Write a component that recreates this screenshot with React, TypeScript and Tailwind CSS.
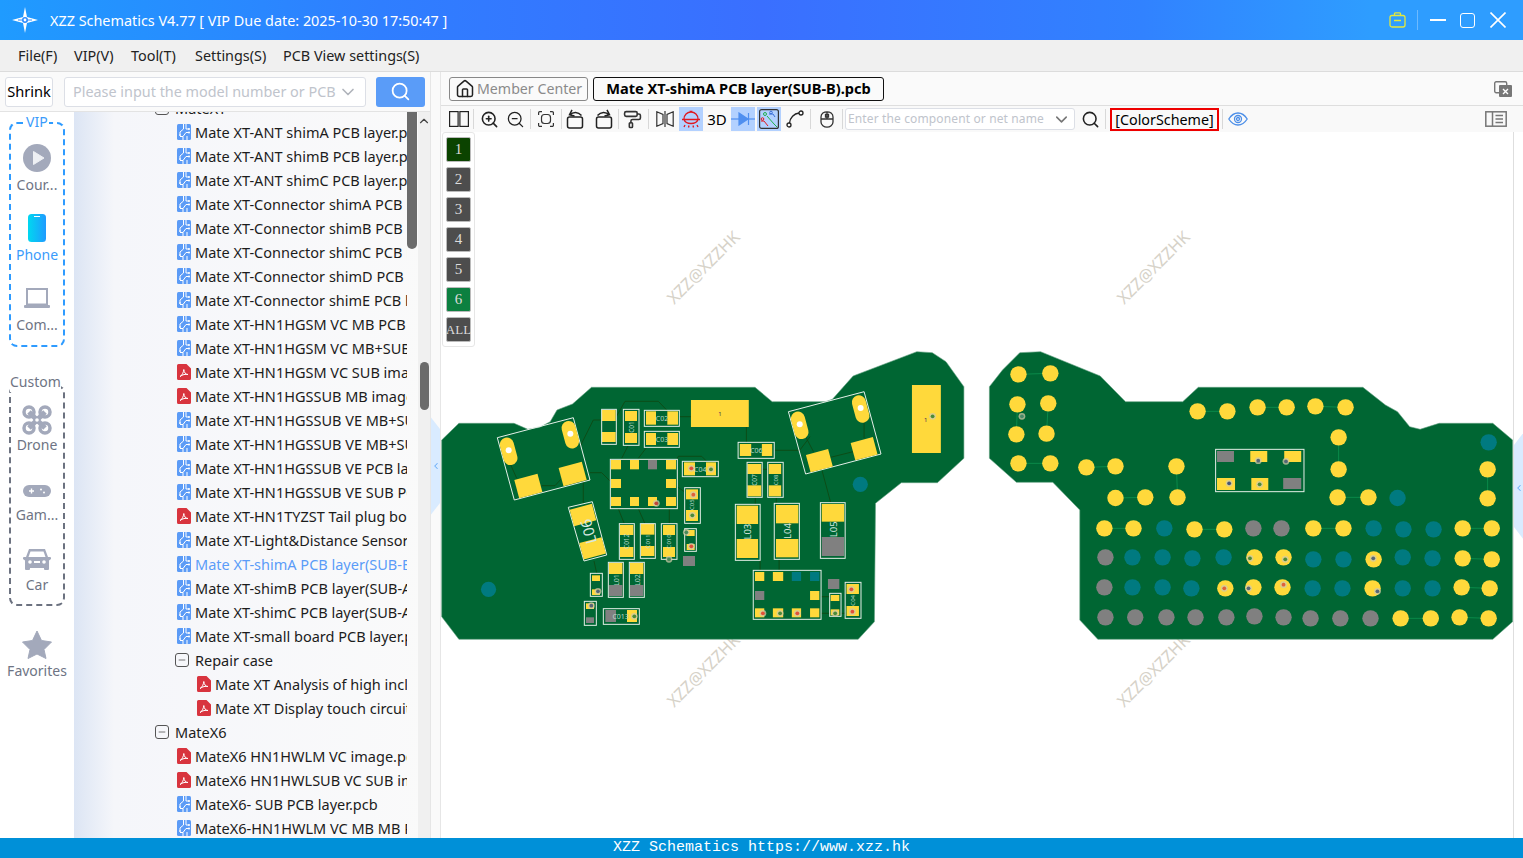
import React from "react";
import { ZoomIn, ZoomOut, PaintRoller, Search, House, ChevronDown, ChevronUp, ChevronLeft, Minus } from "lucide-react";

const Z4 = (x: number, y: number): [number, number] => [440 + x / 2.905, 340 + y / 3];
const Z5 = (x: number, y: number): [number, number] => [980 + x / 2.886, 340 + y / 3];
const Z7 = (x: number, y: number): [number, number] => [490 + x / 3, 400 + y / 3];
type M = (x: number, y: number) => [number, number];
const GREEN = "#006633", Y = "#ffd93b", T = "#007a80", G = "#808080";

const pts = (m: M, a: number[][]) => a.map(([x, y]) => m(x, y).map((v) => v.toFixed(1)).join(",")).join(" ");

const leftOutline = [[5,300],[55,250],[215,250],[255,268],[290,262],[320,245],[340,210],[385,192],[440,142],[915,142],[965,185],[1120,185],[1140,178],[1200,108],[1385,35],[1430,38],[1470,65],[1522,140],[1522,355],[1445,428],[1340,428],[1265,490],[1262,845],[1215,898],[55,898],[5,830]];
const rightOutline = [[27,140],[65,90],[115,38],[175,35],[347,108],[420,185],[585,185],[630,142],[1105,142],[1170,195],[1205,215],[1240,260],[1270,268],[1325,250],[1480,250],[1537,300],[1537,845],[1480,898],[340,898],[288,840],[288,510],[210,427],[105,427],[27,355]];

const rCircles: [number, number, string][] = [
  [111,103,Y],[203,100,Y],[108,193,Y],[197,190,Y],[105,283,Y],[192,281,Y],[111,370,Y],[203,370,Y],[307,382,Y],[391,379,Y],[391,474,Y],[477,472,Y],[567,379,Y],[570,472,Y],[628,214,Y],[714,214,Y],[801,202,Y],[885,202,Y],[968,199,Y],[1055,202,Y],[1035,292,Y],[1035,388,Y],[1032,472,Y],[1121,472,Y],[1465,388,Y],[1465,475,Y],[1468,307,T],[1205,474,T],
  [359,565,Y],[443,565,Y],[532,565,T],[619,568,Y],[705,568,Y],[789,565,G],[870,565,G],[962,565,Y],[1049,565,Y],[1136,565,T],[1222,568,T],[1309,568,T],[1393,565,Y],[1477,565,Y],
  [362,652,G],[440,652,T],[527,652,T],[613,655,T],[703,652,T],[792,652,Y],[876,652,Y],[962,658,T],[1049,658,T],[1136,658,Y],[1220,652,T],[1306,655,T],[1393,655,Y],[1477,658,Y],
  [359,742,G],[440,742,T],[527,742,T],[610,745,T],[708,745,Y],[789,742,Y],[873,742,Y],[960,745,T],[1046,745,T],[1133,745,Y],[1220,745,T],[1306,745,T],[1390,742,Y],[1471,745,Y],
  [362,832,G],[448,832,G],[538,832,G],[622,832,G],[711,832,G],[792,829,G],[876,832,G],[954,835,G],[1040,835,G],[1127,835,G],[1214,835,Y],[1301,835,Y],[1384,832,Y],[1468,835,Y],
];
const rLinks = [[111,103,203,100],[108,193,105,283],[197,190,192,281],[111,370,203,370],[307,382,391,379],[391,474,477,472],[567,379,570,472],[628,214,714,214],[801,202,885,202],[968,199,1055,202],[1035,292,1035,388],[1032,472,1121,472],[1465,388,1465,475],[359,565,443,565],[619,568,705,568],[962,565,1049,565],[1393,565,1477,565],[1393,655,1477,658],[1390,742,1471,745],[1214,835,1301,835],[1384,832,1468,835]];
const rDots: [number, number, string][] = [[121,229,"#4a8a6a"],[803,362,"#556677"],[883,364,"#556677"],[719,430,"#445577"],[807,433,"#4a8a3a"],[779,655,"#4a8a3a"],[881,658,"#4a8a3a"],[1135,655,"#556677"],[705,745,"#e0603a"],[775,745,"#556677"],[876,734,"#e0603a"],[1147,754,"#556677"]];

type R = [number, number, number, number, string?];
const z7Pads: R[] = [
  [335,30,42,33],[335,96,42,30],[405,33,36,30],[405,99,36,30],[468,34,30,40],[532,34,32,40],[468,99,30,36],[532,99,32,36],
  [363,180,30,28],[420,180,27,28],[474,180,27,28,G],[528,180,30,28],[363,237,30,27],[528,237,30,27],[363,291,30,27],[420,291,27,27],[474,291,27,27],[528,291,30,27],
  [582,187,33,39],[648,187,30,39],[588,268,36,30],[588,330,36,33],[390,375,40,30],[390,441,40,30],[453,371,40,33],[453,438,40,30],[519,375,36,30],[519,441,36,30],
  [590,390,24,18],[590,432,24,18],[579,468,36,30,G],[357,489,40,33],[357,555,40,33,G],[420,489,40,33],[420,555,40,33,G],[306,526,24,17],[306,568,24,17],[288,610,24,17],[288,652,24,17,G],[346,630,32,36,G],[411,630,30,36],
];
const z7Boxes = [[335,28,379,133],[400,28,447,136],[463,31,568,79],[463,94,568,142],[361,178,562,326],[577,184,685,230],[584,263,631,370],[388,371,433,478],[451,371,496,475],[514,371,561,478],[584,386,619,454],[355,487,400,592],[418,487,463,592],[301,520,337,589],[283,604,319,676],[340,626,448,673]];
const z4Pads: R[] = [
  [729,180,168,81],[1371,135,84,204],[871,312,33,36],[935,312,30,36],[893,372,40,30],[893,436,40,33],[955,372,36,30],[955,436,36,33],[862,497,62,55],[862,597,62,57],[976,495,65,55],[976,597,65,55],[1109,492,65,53],[1109,591,65,57,G],
  [915,696,27,27],[967,696,30,27],[1022,696,27,27,T],[1075,696,27,27,T],[915,753,27,27,G],[1075,753,27,27],[915,805,27,27],[967,805,30,27],[1022,805,27,27],[1075,805,27,27],[1127,717,33,30,G],[1135,765,25,18],[1135,808,25,18],[1181,732,36,30],[1181,798,36,30],
];
const z4Boxes = [[866,307,971,355],[892,367,936,472],[952,367,997,472],[858,493,930,661],[971,490,1044,658],[1105,488,1177,655],[910,691,1107,838],[1132,760,1165,829],[1177,727,1223,835]];
const z7Dots: [number, number, string][] = [[499,310,"#c0443a"],[604,205,"#e0503a"],[663,208,"#4a8a3a"],[610,284,"#e0603a"],[607,346,"#4a8a3a"],[537,478,"#4a8a5a"],[589,397,"#4a8a5a"],[604,439,"#e0503a"],[324,574,"#556677"],[304,617,"#556677"],[433,649,"#4a8a3a"]];
const z4Dots: [number, number, string][] = [[938,820,"#e0503a"],[988,820,"#4a8a3a"],[1038,820,"#e0503a"],[1148,820,"#4a8a3a"],[1195,748,"#e0503a"],[1198,815,"#e0503a"],[1431,229,"#4a8a3a"]];
const traces7 = ["335,60 310,60 270,140", "379,50 405,4 505,4 530,30", "415,136 395,175", "470,142 445,175", "300,218 335,218 361,244", "560,180 565,169 635,169 650,184", "562,260 584,276", "385,326 403,371", "445,326 465,371", "538,326 538,371", "280,240 280,310", "312,483 320,520", "60,190 80,235", "155,257 195,257 215,235", "400,592 398,487", "568,50 603,50"];
const traces4 = ["890,261 890,307", "971,331 1045,331 1075,290", "1135,352 1200,335", "1110,392 1135,488", "916,472 916,493", "977,472 977,490", "930,661 930,691", "985,658 985,691", "1107,820 1132,820", "1107,770 1132,770", "1165,820 1177,820", "936,388 952,388", "1062,290 1085,335", "1232,245 1232,295"];

function Label({ x, y, t, rot = 0, size = 7, fill = "#b7d8c8" }: { x: number; y: number; t: string; rot?: number; size?: number; fill?: string }) {
  return (
    <text x={x} y={y} fontSize={size} fill={fill} textAnchor="middle" dominantBaseline="central" fontFamily="Noto Sans, sans-serif" transform={rot ? `rotate(${rot} ${x} ${y})` : undefined}>
      {t}
    </text>
  );
}

function Rotated({ m, cx, cy, w, h }: { m: M; cx: number; cy: number; w: number; h: number }) {
  const [x, y] = m(cx, cy);
  return <rect x={x - w / 2} y={y - h / 2} width={w} height={h} fill={Y} transform={`rotate(-15 ${x} ${y})`} />;
}
function Slot({ m, cx, cy }: { m: M; cx: number; cy: number }) {
  const [x, y] = m(cx, cy);
  return (
    <g>
      <rect x={x - 7} y={y - 14} width={14} height={28} rx={7} fill={Y} transform={`rotate(-15 ${x} ${y})`} />
      <circle cx={x} cy={y - 1} r={3} fill="#fff" />
    </g>
  );
}
function Dot({ m, d }: { m: M; d: [number, number, string] }) {
  const [x, y] = m(d[0], d[1]);
  return (
    <g>
      <circle cx={x} cy={y} r={3.4} fill="#cfc9a8" opacity={0.75} />
      <circle cx={x} cy={y} r={1.9} fill={d[2]} />
    </g>
  );
}

function Pcb() {
  const rect = (m: M, r: R, k: string) => {
    const [x, y] = m(r[0], r[1]);
    const [x2, y2] = m(r[0] + r[2], r[1] + r[3]);
    return <rect key={k} x={x} y={y} width={x2 - x} height={y2 - y} fill={r[4] || Y} />;
  };
  const box = (m: M, r: number[], k: string) => {
    const [x, y] = m(r[0], r[1]);
    const [x2, y2] = m(r[2], r[3]);
    return <rect key={k} x={x} y={y} width={x2 - x} height={y2 - y} fill="none" stroke="#e4efe8" strokeWidth={1} />;
  };
  const wm: [number, number][] = [[703, 267], [1153, 267], [703, 670], [1153, 670]];
  return (
    <svg viewBox="441 132 1072 706" className="absolute inset-0 h-full w-full">
      {wm.map(([x, y]) => (
        <text key={x + "" + y} x={x} y={y} fontSize={16.5} fill="#d6d2c8" textAnchor="middle" dominantBaseline="central" fontFamily="Noto Sans, sans-serif" transform={`rotate(-45 ${x} ${y})`}>
          XZZ@XZZHK
        </text>
      ))}
      <polygon points={pts(Z4, leftOutline)} fill={GREEN} stroke="#5f9f80" strokeWidth={0.6} strokeLinejoin="round" />
      <polygon points={pts(Z5, rightOutline)} fill={GREEN} stroke="#5f9f80" strokeWidth={0.6} strokeLinejoin="round" />

      {traces7.map((t, i) => (
        <polyline key={i} points={pts(Z7, t.split(" ").map((p) => p.split(",").map(Number)))} fill="none" stroke="#0d4a14" strokeWidth={0.9} />
      ))}
      {traces4.map((t, i) => (
        <polyline key={i} points={pts(Z4, t.split(" ").map((p) => p.split(",").map(Number)))} fill="none" stroke="#0d4a14" strokeWidth={0.9} />
      ))}

      {z7Pads.map((r, i) => rect(Z7, r, "a" + i))}
      {z4Pads.map((r, i) => rect(Z4, r, "b" + i))}
      {z7Boxes.map((r, i) => box(Z7, r, "c" + i))}
      {z4Boxes.map((r, i) => box(Z4, r, "d" + i))}

      <polygon points={pts(Z7, [[22,113],[250,53],[300,240],[73,300]])} fill="none" stroke="#e4efe8" strokeWidth={1} />
      <polygon points={pts(Z4, [[1012,215],[1232,155],[1281,342],[1062,402]])} fill="none" stroke="#e4efe8" strokeWidth={1} />
      <polygon points={pts(Z7, [[235,322],[307,305],[350,465],[282,483]])} fill="none" stroke="#e4efe8" strokeWidth={1} />
      <Rotated m={Z7} cx={115} cy={258} w={24} h={19} />
      <Rotated m={Z7} cx={248} cy={222} w={24} h={19} />
      <Rotated m={Z7} cx={279} cy={345} w={23} h={17} />
      <Rotated m={Z7} cx={308} cy={445} w={23} h={17} />
      <Rotated m={Z4} cx={1102} cy={362} w={23} h={18} />
      <Rotated m={Z4} cx={1232} cy={326} w={23} h={18} />
      <Slot m={Z7} cx={56} cy={154} />
      <Slot m={Z7} cx={241} cy={104} />
      <Slot m={Z4} cx={1045} cy={256} />
      <Slot m={Z4} cx={1222} cy={207} />

      <circle cx={Z4(141,748)[0]} cy={Z4(141,748)[1]} r={7.6} fill={T} />
      <circle cx={Z4(1221,433)[0]} cy={Z4(1221,433)[1]} r={7.6} fill={T} />

      {rLinks.map((l, i) => {
        const a = Z5(l[0], l[1]);
        const b = Z5(l[2], l[3]);
        return <line key={i} x1={a[0]} y1={a[1]} x2={b[0]} y2={b[1]} stroke="#0a8a4a" strokeWidth={1} />;
      })}
      {rCircles.map((c, i) => {
        const [x, y] = Z5(c[0], c[1]);
        return <circle key={i} cx={x} cy={y} r={8.2} fill={c[2]} />;
      })}
      {[[684,333,49,33,G],[780,333,49,33,Y],[878,333,49,33,Y],[684,414,52,36,Y],[783,414,49,36,Y],[875,414,52,33,G]].map((r, i) => {
        const a = r as [number, number, number, number, string];
        return rect(Z5, a, "r" + i);
      })}
      {box(Z5, [680, 328, 935, 455], "rb")}
      {rDots.map((d, i) => <Dot key={i} m={Z5} d={d} />)}
      {z7Dots.map((d, i) => <Dot key={i} m={Z7} d={d} />)}
      {z4Dots.map((d, i) => <Dot key={i} m={Z4} d={d} />)}

      <Label x={Z7(516,55)[0]} y={Z7(516,55)[1]} t="C02" />
      <Label x={Z7(516,118)[0]} y={Z7(516,118)[1]} t="C03" />
      <Label x={Z7(424,81)[0]} y={Z7(424,81)[1]} t="C01" rot={-90} size={6.5} />
      <Label x={Z7(631,207)[0]} y={Z7(631,207)[1]} t="C04" />
      <Label x={Z7(607,314)[0]} y={Z7(607,314)[1]} t="C05" rot={-90} size={6} />
      <Label x={Z7(410,424)[0]} y={Z7(410,424)[1]} t="C012" rot={-90} size={6.5} />
      <Label x={Z7(474,424)[0]} y={Z7(474,424)[1]} t="C011" rot={-90} size={6} />
      <Label x={Z7(538,424)[0]} y={Z7(538,424)[1]} t="C010" rot={-90} size={6} />
      <Label x={Z7(378,540)[0]} y={Z7(378,540)[1]} t="L01" rot={-90} size={7} />
      <Label x={Z7(441,540)[0]} y={Z7(441,540)[1]} t="L02" rot={-90} size={7} />
      <Label x={Z7(392,649)[0]} y={Z7(392,649)[1]} t="C013" />
      <Label x={Z7(294,395)[0]} y={Z7(294,395)[1]} t="L06" rot={-105} size={15} fill="#d8e8e0" />
      <Label x={Z4(919,331)[0]} y={Z4(919,331)[1]} t="C06" />
      <Label x={Z4(915,420)[0]} y={Z4(915,420)[1]} t="C07" rot={-90} size={6.5} />
      <Label x={Z4(975,420)[0]} y={Z4(975,420)[1]} t="C08" rot={-90} size={6} />
      <Label x={Z4(894,575)[0]} y={Z4(894,575)[1]} t="L03" rot={-90} size={9.5} fill="#d8e8e0" />
      <Label x={Z4(1010,573)[0]} y={Z4(1010,573)[1]} t="L04" rot={-90} size={9.5} fill="#d8e8e0" />
      <Label x={Z4(1144,568)[0]} y={Z4(1144,568)[1]} t="L05" rot={-90} size={9.5} fill="#d8e8e0" />
      <Label x={Z4(1201,781)[0]} y={Z4(1201,781)[1]} t="C04" rot={-90} size={6} />
      <Label x={Z4(813,221)[0]} y={Z4(813,221)[1]} t="1" size={6} fill="#442a55" />
      <Label x={Z4(1411,239)[0]} y={Z4(1411,239)[1]} t="1" size={6} fill="#442a55" />
    </svg>
  );
}

function PcbIcon() {
  return (
    <svg viewBox="0 0 14 16" className="h-4 w-3.5 shrink-0">
      <rect width="14" height="16" rx="1.5" fill="#5b9bf6" />
      <path d="M6.5 0V5L3 8V10M3 12.5H6L9 8.5H12M9 0V5H12M6 16V12.5M10 16V12" stroke="#fff" strokeWidth="1" fill="none" />
      <circle cx="3" cy="11" r="1" fill="#fff" />
      <circle cx="12" cy="5" r="1" fill="#fff" />
      <circle cx="12" cy="8.5" r="1" fill="#fff" />
    </svg>
  );
}
function PdfIcon() {
  return (
    <svg viewBox="0 0 14 16" className="h-4 w-3.5 shrink-0">
      <path d="M1.5 0H9.5L14 4.5V14.5A1.5 1.5 0 0 1 12.500 16H1.500A1.500 1.500 0 0 1 0 14.500V1.500A1.500 1.500 0 0 1 1.500 0Z" fill="#d8343e" />
      <path d="M3 12.500C5 11.500 6.500 8.500 6.800 5.500C7.200 8.500 8.500 10.500 11 10.500C8.500 10 5.500 10.500 3 12.500Z" stroke="#fff" strokeWidth="1" fill="none" />
    </svg>
  );
}
function Box() {
  return (
    <span className="flex h-3.5 w-3.5 shrink-0 items-center justify-center rounded-[3px] border border-[#555]">
      <Minus size={10} strokeWidth={1.6} color="#333" />
    </span>
  );
}

type Row = { t: string; k: "pcb" | "pdf" | "box"; l: number; on?: boolean };
const rows: Row[] = [
  { t: "MateXT", k: "box", l: 0 },
  { t: "Mate XT-ANT shimA PCB layer.pcb", k: "pcb", l: 1 },
  { t: "Mate XT-ANT shimB PCB layer.pcb", k: "pcb", l: 1 },
  { t: "Mate XT-ANT shimC PCB layer.pcb", k: "pcb", l: 1 },
  { t: "Mate XT-Connector shimA PCB layer.pcb", k: "pcb", l: 1 },
  { t: "Mate XT-Connector shimB PCB layer.pcb", k: "pcb", l: 1 },
  { t: "Mate XT-Connector shimC PCB layer.pcb", k: "pcb", l: 1 },
  { t: "Mate XT-Connector shimD PCB layer.pcb", k: "pcb", l: 1 },
  { t: "Mate XT-Connector shimE PCB layer.pcb", k: "pcb", l: 1 },
  { t: "Mate XT-HN1HGSM VC MB PCB layer.pcb", k: "pcb", l: 1 },
  { t: "Mate XT-HN1HGSM VC MB+SUB PCB.pcb", k: "pcb", l: 1 },
  { t: "Mate XT-HN1HGSM VC SUB image.pdf", k: "pdf", l: 1 },
  { t: "Mate XT-HN1HGSSUB MB image.pdf", k: "pdf", l: 1 },
  { t: "Mate XT-HN1HGSSUB VE MB+SUB.pcb", k: "pcb", l: 1 },
  { t: "Mate XT-HN1HGSSUB VE MB+SUB.pcb", k: "pcb", l: 1 },
  { t: "Mate XT-HN1HGSSUB VE PCB layer.pcb", k: "pcb", l: 1 },
  { t: "Mate XT-HN1HGSSUB VE SUB PCB.pcb", k: "pcb", l: 1 },
  { t: "Mate XT-HN1TYZST Tail plug board.pdf", k: "pdf", l: 1 },
  { t: "Mate XT-Light&Distance Sensor.pcb", k: "pcb", l: 1 },
  { t: "Mate XT-shimA PCB layer(SUB-B).pcb", k: "pcb", l: 1, on: true },
  { t: "Mate XT-shimB PCB layer(SUB-A).pcb", k: "pcb", l: 1 },
  { t: "Mate XT-shimC PCB layer(SUB-A).pcb", k: "pcb", l: 1 },
  { t: "Mate XT-small board PCB layer.pcb", k: "pcb", l: 1 },
  { t: "Repair case", k: "box", l: 1 },
  { t: "Mate XT Analysis of high inclination.pdf", k: "pdf", l: 2 },
  { t: "Mate XT Display touch circuit.pdf", k: "pdf", l: 2 },
  { t: "MateX6", k: "box", l: 0 },
  { t: "MateX6 HN1HWLM VC image.pdf", k: "pdf", l: 1 },
  { t: "MateX6 HN1HWLSUB VC SUB image.pdf", k: "pdf", l: 1 },
  { t: "MateX6- SUB PCB layer.pcb", k: "pcb", l: 1 },
  { t: "MateX6-HN1HWLM VC MB MB PCB.pcb", k: "pcb", l: 1 },
];

function TreeRow({ r }: { r: Row }) {
  const pad = r.k === "box" ? (r.l === 0 ? "pl-[81px]" : "pl-[101px]") : r.l === 1 ? "pl-[103px]" : "pl-[123px]";
  return (
    <div className={`flex h-6 items-center whitespace-nowrap ${pad} ${r.k === "box" ? "gap-[6px]" : "gap-1"} ${r.on ? "text-[#5b9cf8]" : "text-[#1c1c1c]"}`}>
      {r.k === "box" ? <Box /> : r.k === "pcb" ? <PcbIcon /> : <PdfIcon />}
      <span className="pt-[2px]">{r.t}</span>
    </div>
  );
}

function RailItem({ icon, label, on, up }: { icon: React.ReactNode; label: string; on?: boolean; up?: boolean }) {
  return (
    <div className="flex h-[70px] flex-col items-center">
      <div className="flex h-[30px] items-center justify-center">{icon}</div>
      <div className={`flex h-[22px] items-center text-[14px] ${up ? "-mt-[2px]" : ""} ${on ? "text-[#3a9bfb]" : "text-[#6e7484]"}`}>{label}</div>
    </div>
  );
}

const GR = "#a3a9bb";
const IconBtn = ({ children, on, cls = "w-[26px]" }: { children: React.ReactNode; on?: boolean; cls?: string }) => (
  <div className={`flex h-[25px] shrink-0 items-center justify-center ${cls}`}>
    <div className={`flex h-[24px] w-[24px] items-center justify-center ${on ? "bg-[#b3d1ff]" : ""}`}>{children}</div>
  </div>
);
const Sep = ({ cls }: { cls: string }) => <div className={`h-5 w-px shrink-0 bg-[#d8d8d8] ${cls}`} />;

export default function App() {
  return (
    <div className="flex h-[858px] w-[1523px] flex-col overflow-hidden bg-white font-['Noto_Sans','Noto_Sans_CJK_SC',sans-serif] text-[14.4px] text-black">
      {/* Title bar */}
      <div className="flex h-10 shrink-0 items-center bg-[linear-gradient(90deg,#1f9bff_0%,#2f7eff_25%,#3a6fff_50%,#3182ff_75%,#2e9dff_90%)] text-white">
        <svg viewBox="0 0 26 26" className="ml-3 h-[26px] w-[26px]">
          <path d="M13 0L15 10L26 13L15 16L13 26L11 16L0 13L11 10Z" fill="#fff" />
          <circle cx="13" cy="13" r="3" fill="#2c8cff" />
          <circle cx="13" cy="13" r="1.400" fill="#fff" />
          <path d="M6 13H10M16 13H20" stroke="#2c8cff" strokeWidth="1" />
        </svg>
        <span className="ml-3 pt-px text-[14.4px]">XZZ Schematics V4.77 [ VIP Due date: 2025-10-30 17:50:47 ]</span>
        <div className="ml-auto flex items-center">
          <svg viewBox="0 0 18 16" className="h-4 w-[18px]" fill="none" stroke="#e4e83c" strokeWidth="1.300">
            <rect x="1" y="3.500" width="15" height="11.500" rx="2" />
            <path d="M5.500 3.500V1.500A1 1 0 0 1 6.500 .8H10.500A1 1 0 0 1 11.500 1.500V3.500M5 8.500H12" />
          </svg>
          <div className="ml-[10px] h-5 w-px bg-white/30" />
          <div className="ml-3 h-[2px] w-4 bg-white" />
          <div className="ml-[14px] h-[15px] w-[15px] rounded-[3px] border-[1.5px] border-white" />
          <svg viewBox="0 0 16 16" className="mx-[17px] ml-[15px] h-4 w-4" stroke="#fff" strokeWidth="1.600">
            <path d="M.5 .5L15.500 15.500M15.500 .5L.5 15.500" />
          </svg>
        </div>
      </div>
      {/* Menu */}
      <div className="flex h-8 shrink-0 items-center border-b border-[#dcdcdc] bg-[#f0f0f0] pl-[18px] text-[14.4px] text-[#222]">
        <span className="w-[56px]">File(F)</span>
        <span className="w-[57px]">VIP(V)</span>
        <span className="w-[64px]">Tool(T)</span>
        <span className="w-[88px]">Settings(S)</span>
        <span>PCB View settings(S)</span>
      </div>
      <div className="flex min-h-0 flex-1">
        {/* Left */}
        <div className="flex w-[431px] shrink-0 flex-col border-r border-[#e6e6e6]">
          <div className="flex h-[40px] shrink-0 items-center border-b border-[#e3e3e3] bg-[#fafafa] pl-[5px]">
            <div className="flex h-[30px] w-[48px] items-center justify-center rounded-[3px] border border-[#dcdfe6] bg-white pt-px text-[14.6px]">Shrink</div>
            <div className="ml-[11px] flex h-[30px] w-[302px] items-center justify-between whitespace-nowrap rounded-[3px] border border-[#dcdfe6] bg-white pl-2 pr-[7px] pt-px text-[14.4px] text-[#c0c4cc]">
              <span>Please input the model number or PCB</span>
              <ChevronDown size={20} color="#b0b4bb" />
            </div>
            <div className="ml-[10px] flex h-[30px] w-[49px] items-center justify-center rounded-[3px] bg-[#5a9cf8]">
              <Search size={21} color="#fff" strokeWidth={2} />
            </div>
          </div>
          <div className="flex min-h-0 flex-1">
            {/* Rail */}
            <div className="w-[74px] shrink-0 bg-white pl-[9px]">
              <div className="relative mt-[10px] h-[225px] w-[56px] rounded-lg border-2 border-dashed border-[#2e9bff] pt-[19px]">
                <div className="absolute -top-[12px] left-[14px] bg-white px-[1px] text-[14px] leading-5 text-[#3a9bfb]">VIP</div>
                <RailItem
                  label="Cour..."
                  icon={
                    <svg viewBox="0 0 28 28" className="h-7 w-7">
                      <circle cx="14" cy="14" r="14" fill={GR} />
                      <path d="M10.500 7.500L21 14L10.500 20.500Z" fill="#eef0f4" stroke="#eef0f4" strokeLinejoin="round" />
                    </svg>
                  }
                />
                <RailItem
                  on
                  label="Phone"
                  icon={
                    <svg viewBox="0 0 18 28" className="h-7 w-[18px]">
                      <defs>
                        <linearGradient id="ph" x1="0" x2="1" y1="0" y2="0">
                          <stop offset="0" stopColor="#00d8f0" />
                          <stop offset="1" stopColor="#1f9bff" />
                        </linearGradient>
                      </defs>
                      <rect width="18" height="28" rx="3.500" fill="url(#ph)" />
                      <rect x="6" y="2" width="6" height="1" fill="#fff" />
                    </svg>
                  }
                />
                <RailItem
                  label="Com..."
                  icon={
                    <svg viewBox="0 0 30 20" className="h-5 w-[30px]" fill={GR}>
                      <path d="M4 0H26V16H24V2H6V16H4Z" />
                      <rect x="2" y="17" width="26" height="3" rx="1" />
                      <rect x="4" y="15.500" width="22" height="2" />
                    </svg>
                  }
                />
              </div>
              <div className="relative mt-[38px] h-[221px] w-[56px] rounded-lg border-2 border-dashed border-[#6c7280] pt-[18px]">
                <div className="absolute -left-[1px] -top-[15px] whitespace-nowrap bg-white text-[14px] leading-5 text-[#6e7484]">Custom</div>
                <RailItem
                  up
                  label="Drone"
                  icon={
                    <svg viewBox="0 0 30 30" className="h-[30px] w-[30px]" fill="none" stroke={GR}>
                      <circle cx="7" cy="7" r="5" strokeWidth="3.500" />
                      <circle cx="23" cy="7" r="5" strokeWidth="3.500" />
                      <circle cx="7" cy="23" r="5" strokeWidth="3.500" />
                      <circle cx="23" cy="23" r="5" strokeWidth="3.500" />
                      <path d="M7 7L23 23M23 7L7 23" strokeWidth="5" />
                      <circle cx="15" cy="15" r="3.500" fill={GR} stroke="none" />
                      <circle cx="15" cy="15" r="1.800" fill="#fff" stroke="none" />
                    </svg>
                  }
                />
                <RailItem
                  up
                  label="Gam..."
                  icon={
                    <svg viewBox="0 0 28 12" className="mt-[2px] h-3 w-7">
                      <rect width="28" height="12" rx="6" fill={GR} />
                      <path d="M6 6H11M8.500 3.500V8.500" stroke="#fff" strokeWidth="1.400" />
                      <circle cx="18" cy="4.500" r="1" fill="#fff" />
                      <circle cx="21" cy="7.500" r="1" fill="#fff" />
                    </svg>
                  }
                />
                <RailItem
                  up
                  label="Car"
                  icon={
                    <svg viewBox="0 0 28 24" className="h-6 w-7" fill={GR}>
                      <path d="M6 1H22L25 9H27A1 1 0 0 1 28 10V11L26 12.500V21A1 1 0 0 1 25 22H22A1 1 0 0 1 21 21V20H7V21A1 1 0 0 1 6 22H3A1 1 0 0 1 2 21V12.500L0 11V10A1 1 0 0 1 1 9H3Z" />
                      <path d="M7.500 3.500H20.500L22.500 9H5.500Z" fill="#fff" />
                      <circle cx="7" cy="14" r="1.800" fill="#fff" />
                      <circle cx="21" cy="14" r="1.800" fill="#fff" />
                      <rect x="11" y="13" width="6" height="2" fill="#fff" />
                    </svg>
                  }
                />
              </div>
              <div className="-ml-[9px] mt-[23px] flex h-[60px] w-[74px] flex-col items-center">
                <div className="flex h-[30px] items-center">
                  <svg viewBox="0 0 30 29" className="h-[29px] w-[30px]">
                    <path d="M15 1L19.500 10.500L29.500 12L22 19.500L24 28.500L15 24L6 28.500L8 19.500L.5 12L10.500 10.500Z" fill={GR} stroke={GR} strokeLinejoin="round" />
                  </svg>
                </div>
                <div className="flex h-[22px] items-center text-[14px] text-[#6e7484]">Favorites</div>
              </div>
            </div>
            {/* Tree */}
            <div className="relative min-w-0 flex-1 overflow-hidden bg-[linear-gradient(90deg,#dce5f4_0,#f5f6fa_40px,#fafafa_100%)]">
              <div className="absolute -top-4 left-0 w-[333px] overflow-hidden text-[14.5px]">
                {rows.map((r, i) => (
                  <TreeRow key={i} r={r} />
                ))}
              </div>
              <div className="absolute left-[333px] top-0 h-[137px] w-[10px] rounded-b-md bg-[#6b6b6b]" />
              <div className="absolute bottom-0 left-[344px] top-0 w-3 bg-[#f0f0f0]">
                <ChevronUp size={14} color="#444" className="absolute left-[-1px] top-[2px]" />
                <div className="absolute left-[2px] top-[250px] h-[48px] w-[9px] rounded-full bg-[#6b6b6b]" />
              </div>
            </div>
          </div>
        </div>
        {/* Splitter */}
        <div className="relative w-[10px] shrink-0 border-r border-[#e6e6e6] bg-[#fafafa]">
          <svg viewBox="0 0 10 108" className="absolute left-0 top-[340px] h-[108px] w-[9px]">
            <path d="M0 0L10 13V95L0 108Z" fill="#d9ebff" />
          </svg>
          <ChevronLeft size={10} color="#6aaef8" strokeWidth={2.500} className="absolute left-0 top-[389px]" />
        </div>
        {/* Right */}
        <div className="flex min-w-0 flex-1 flex-col">
          <div className="flex h-[34px] shrink-0 items-center border-b border-[#dedede] bg-[#fafafa] pl-2">
            <div className="flex h-[24px] w-[139px] items-center whitespace-nowrap rounded-[3px] border border-[#888] pl-[5px] text-[14.2px] text-[#8a8a8a]">
              <House size={20} color="#222" strokeWidth={1.800} />
              <span className="ml-[2px]">Member Center</span>
            </div>
            <div className="ml-[5px] flex h-[24px] w-[291px] items-center justify-center whitespace-nowrap rounded-[3px] border border-[#111] text-[14.6px] font-bold">Mate XT-shimA PCB layer(SUB-B).pcb</div>
            <svg viewBox="0 0 18 16" className="ml-auto mr-[11px] h-4 w-[18px]">
              <rect x=".7" y=".7" width="12" height="11" rx="1.500" fill="none" stroke="#777" strokeWidth="1.400" />
              <rect x="5" y="4" width="13" height="12" rx="1" fill="#777" />
              <path d="M9 8L14 13M14 8L9 13" stroke="#fff" strokeWidth="1.400" />
            </svg>
          </div>
          <div className="flex h-[26px] shrink-0 items-center bg-[#f9f9f9] pl-[5px]">
            <IconBtn>
              <svg viewBox="0 0 20 16" className="h-4 w-5" fill="none" stroke="#222" strokeWidth="1.200">
                <rect x=".6" y=".6" width="8.500" height="14.800" />
                <rect x="10.900" y=".6" width="8.500" height="14.800" />
              </svg>
            </IconBtn>
            <Sep cls="ml-px mr-[2px]" />
            <IconBtn><ZoomIn size={19} strokeWidth={2} color="#222" /></IconBtn>
            <IconBtn><ZoomOut size={19} strokeWidth={1.600} color="#222" /></IconBtn>
            <Sep cls="ml-[2px] mr-[2px]" />
            <IconBtn>
              <svg viewBox="0 0 16 16" className="h-4 w-4" fill="none" stroke="#333" strokeWidth="1.200">
                <path d="M4 .6H1.800A1.200 1.200 0 0 0 .6 1.800V4M12 .6H14.200A1.200 1.200 0 0 1 15.400 1.800V4M4 15.400H1.800A1.200 1.200 0 0 1 .6 14.200V12M12 15.400H14.200A1.200 1.200 0 0 0 15.400 14.200V12" />
                <rect x="3.500" y="3.500" width="9" height="9" rx="3" />
              </svg>
            </IconBtn>
            <Sep cls="ml-[2px] mr-px" />
            <IconBtn>
              <svg viewBox="0 0 20 20" className="h-5 w-5" fill="none" stroke="#222" strokeWidth="1.500">
                <rect x="1.500" y="8" width="15" height="11" rx="2" />
                <path d="M4 6C7 2.500 12 2.500 15.500 6.500M6 .8L3.500 5.800L8.500 7" />
              </svg>
            </IconBtn>
            <IconBtn cls="w-[27px]">
              <svg viewBox="0 0 20 20" className="h-5 w-5" fill="none" stroke="#222" strokeWidth="1.500">
                <rect x="3.500" y="8" width="15" height="11" rx="2" />
                <path d="M16 6C13 2.500 8 2.500 4.500 6.500M14 .8L16.500 5.800L11.500 7" />
              </svg>
            </IconBtn>
            <Sep cls="ml-[2px]" />
            <IconBtn><PaintRoller size={19} color="#333" /></IconBtn>
            <Sep cls="ml-[3px] mr-[3px]" />
            <IconBtn>
              <svg viewBox="0 0 18 16" className="h-4 w-[18px]" fill="none" stroke="#333" strokeWidth="1.200">
                <path d="M.8 .8L7 3.500V12.500L.8 15.200ZM17.200 .8L11 3.500V12.500L17.200 15.200ZM9 0V16" />
              </svg>
            </IconBtn>
            <IconBtn on>
              <svg viewBox="0 0 20 18" className="h-[18px] w-5" fill="none" stroke="#e01820" strokeWidth="1.300">
                <path d="M3 9A7 7 0 0 1 17 9M1 9.500H19M3 9.500C4 12.500 7 13.500 10 13.500C13 13.500 16 12.500 17 9.500M8.500 1.500H11.500M4 15L3 17M8 15.500L7.500 17.500M12 15.500L12.500 17.500M16 15L17 17" />
              </svg>
            </IconBtn>
            <IconBtn><span className="text-[15px]">3D</span></IconBtn>
            <IconBtn on>
              <svg viewBox="0 0 24 14" className="h-3.5 w-6" fill="#4f8ff0" stroke="#4f8ff0" strokeWidth="1.200">
                <path d="M0 7H24" />
                <path d="M8 1V13L17 7Z" />
                <path d="M17.500 1V13" />
              </svg>
            </IconBtn>
            <IconBtn on>
              <svg viewBox="0 0 20 20" className="h-5 w-5" fill="none" strokeWidth="1">
                <rect x=".6" y=".6" width="18.800" height="18.800" rx="2" stroke="#333" strokeWidth="1.200" />
                <path d="M8 7L15 15L18 18" stroke="#22b14c" />
                <path d="M2 12L5 12L9 17" stroke="#e01820" />
                <path d="M10 5L14 5L16 8" stroke="#3a6ed8" />
                <circle cx="6" cy="5" r="1.500" stroke="#22b14c" />
                <circle cx="12" cy="3.500" r="1.300" stroke="#3a6ed8" />
                <circle cx="3.500" cy="10" r="1.300" stroke="#e01820" />
              </svg>
            </IconBtn>
            <IconBtn>
              <svg viewBox="0 0 18 18" className="h-[18px] w-[18px]" fill="none" stroke="#222" strokeWidth="1.300">
                <circle cx="3" cy="15" r="2" />
                <circle cx="15" cy="3" r="2" />
                <path d="M3.500 13C4 8 8 3.500 13 3" />
              </svg>
            </IconBtn>
            <Sep cls="ml-[2px] mr-[3px]" />
            <IconBtn>
              <svg viewBox="0 0 14 17" className="h-[17px] w-3.5" fill="none" stroke="#333" strokeWidth="1.300">
                <path d="M7 .8C10 .8 13 2.500 13 6V11C13 14 10 16.200 7 16.200C4 16.200 1 14 1 11V6C1 2.500 4 .8 7 .8ZM1 8H13M7 .8V8M5.500 3.500H8.500V6H5.500Z" />
              </svg>
            </IconBtn>
            <Sep cls="ml-[2px] mr-[2px]" />
            <div className="flex h-[22px] w-[230px] shrink-0 items-center justify-between overflow-hidden rounded-[3px] border border-[#dcdfe6] bg-white pl-[2px] pr-[3px] text-[12px] tracking-[0.13px] text-[#c0c4cc]">
              <span className="overflow-hidden whitespace-nowrap">Enter the component or net name</span>
              <ChevronDown size={19} color="#777" className="shrink-0" />
            </div>
            <div className="flex w-[30px] shrink-0 justify-center"><Search size={19} color="#222" /></div>
            <Sep cls="" />
            <div className="ml-1 flex h-[23px] w-[109px] shrink-0 items-center justify-center whitespace-nowrap border-2 border-[#ee0000] pt-px text-[14.3px]">[ColorScheme]</div>
            <Sep cls="ml-[3px]" />
            <svg viewBox="0 0 20 14" className="ml-[5px] h-3.5 w-5" fill="none" stroke="#4d8fe8" strokeWidth="1.300">
              <path d="M.8 7C4 2 7 1 10 1C13 1 16 2 19.200 7C16 12 13 13 10 13C7 13 4 12 .8 7Z" />
              <circle cx="10" cy="7" r="3.500" />
              <circle cx="10" cy="7" r="1.500" />
            </svg>
            <svg viewBox="0 0 22 16" className="ml-auto mr-[16px] h-4 w-[22px]" fill="none" stroke="#777" strokeWidth="1.500">
              <rect x=".8" y=".8" width="20.400" height="14.400" />
              <path d="M7.500 1V15M10.500 4.500H18M10.500 8H18M10.500 11.500H18" />
            </svg>
          </div>
          <div className="flex min-h-0 flex-1">
            <div className="relative min-w-0 flex-1 bg-white">
              <Pcb />
              <div className="absolute left-px top-0 flex w-[33px] flex-col items-center gap-[5px] rounded-[3px] border border-[#e6e6e6] bg-white pb-[4px] pt-[4px] font-['Liberation_Serif',serif] text-[15px] text-[#dcdcdc]">
                {["1", "2", "3", "4", "5", "6", "ALL"].map((t, i) => (
                  <div
                    key={t}
                    className={`flex h-[25px] w-[25px] items-center justify-center rounded-[2px] border border-[#bbb] ${i === 0 ? "bg-[#0b4300]" : i === 5 ? "bg-[#0c8040]" : "bg-[#4d4d4d]"} ${t === "ALL" ? "text-[13px]" : ""}`}
                  >
                    {t}
                  </div>
                ))}
              </div>
            </div>
            <div className="relative w-[10px] shrink-0 border-l border-[#dedede] bg-white">
              <svg viewBox="0 0 10 108" className="absolute left-0 top-[300px] h-[108px] w-[10px]">
                <path d="M10 0L0 13V95L10 108Z" fill="#d9ebff" />
              </svg>
              <ChevronLeft size={10} color="#6aaef8" strokeWidth={2.500} className="absolute left-0 top-[351px]" />
            </div>
          </div>
        </div>
      </div>
      {/* Footer */}
      <div className="flex h-5 shrink-0 items-center justify-center bg-[#0090d8] pt-px font-['Liberation_Mono',monospace] text-[15px] text-white">
        XZZ Schematics https://www.xzz.hk
      </div>
    </div>
  );
}
